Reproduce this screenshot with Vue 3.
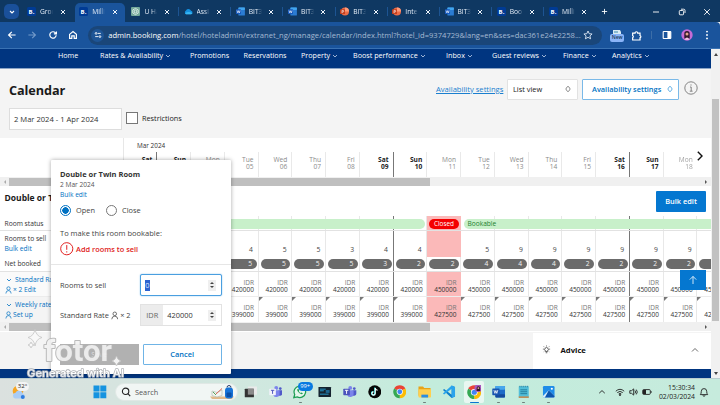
<script setup>
const tabs = [
  { icon: 'b', title: 'Grou' },
  { icon: 'b', title: 'Milli', active: true },
  { icon: 'gpt', title: 'U Ha' },
  { icon: 'cloud', title: 'Assi' },
  { icon: 'w', title: 'BIT3' },
  { icon: 'w', title: 'BIT3' },
  { icon: 'p', title: 'BIT3' },
  { icon: 'p', title: 'Inte' },
  { icon: 'w', title: 'BIT3' },
  { icon: 'b', title: 'Boo' },
  { icon: 'b', title: 'Milli' },
]

const nav = [
  { label: 'Home' },
  { label: 'Rates & Availability', menu: true },
  { label: 'Promotions' },
  { label: 'Reservations' },
  { label: 'Property', menu: true },
  { label: 'Boost performance', menu: true },
  { label: 'Inbox', menu: true },
  { label: 'Guest reviews', menu: true },
  { label: 'Finance', menu: true },
  { label: 'Analytics', menu: true },
]

const names = ['Sat', 'Sun', 'Mon', 'Tue', 'Wed', 'Thu', 'Fri']
const sell = ['', '', '', 4, 5, 5, 3, 4, 4, '', 5, 9, 9, 9, 9, 9, 9, '']
const booked = ['', '', '', 5, 5, 5, 5, 3, 2, 2, 4, 4, 4, 2, 2, 2, 2, '']
const days = sell.map((n, i) => ({
  name: names[i % 7],
  num: String(i + 2).padStart(2, '0'),
  weekend: i % 7 < 2,
  sat: i % 7 === 0,
  closed: i === 9,
  sell: n,
  booked: booked[i],
  cur: i < 3 ? '' : 'IDR',
  std: i < 3 ? '' : i < 9 ? '420000' : '450000',
  weekly: i < 3 ? '' : i < 9 ? '399000' : '427500',
}))

const apps = ['view', 'teamsw', 'whatsapp', 'monitor', 'teams', 'tiktok', 'chrome', 'folder', 'code', 'chromep', 'word', 'notes', 'photos']
const running = ['whatsapp', 'folder', 'word', 'notes', 'photos']
</script>

<template>
  <div class="screen">
    <div class="tabs">
      <div class="tab-search"><svg viewBox="0 0 8 8"><path d="M2 3l2 2 2-2" /></svg></div>
      <div v-for="(t, i) in tabs" :key="i" class="tab" :class="{ active: t.active, sep: i > 2 }">
        <svg class="fav" viewBox="0 0 9 9">
          <template v-if="t.icon === 'b'">
            <rect width="9" height="9" rx="1.5" fill="#003b95" />
            <text x="1.6" y="7" class="favb">B.</text>
          </template>
          <template v-else-if="t.icon === 'gpt'">
            <rect width="9" height="9" rx="1" fill="#75a99b" />
            <path d="M4.5 1.4l2.7 1.5v3.2L4.5 7.6 1.8 6.1V2.9zM4.5 3l1.3.8v1.5l-1.3.7-1.3-.7V3.8z" fill="none" stroke="#e9f5f0" stroke-width=".8" />
          </template>
          <template v-else-if="t.icon === 'cloud'">
            <path d="M2 7.2A2 2 0 0 1 2 3.6 2.8 2.8 0 0 1 7 3.7a1.8 1.8 0 0 1 .2 3.5z" fill="#1490df" />
            <path d="M1 6.4Q4 3.6 8.5 6.2L7.2 7.2H2z" fill="#37b6f4" />
          </template>
          <template v-else-if="t.icon === 'w'">
            <rect x="2.4" y="0.5" width="6.5" height="8" rx=".6" fill="#2b7cd3" />
            <rect x="2.4" y="0.5" width="6.5" height="2.4" rx=".6" fill="#41a5ee" />
            <rect x="0" y="2.3" width="5" height="4.7" rx=".5" fill="#185abd" />
            <path d="M1 3.5l.8 2.4.8-2.2.8 2.2.7-2.4" fill="none" stroke="#fff" stroke-width=".6" />
          </template>
          <template v-else>
            <circle cx="5" cy="4.5" r="4" fill="#ed6c47" />
            <path d="M5 .5a4 4 0 0 1 4 4H5z" fill="#ff9b7a" />
            <rect x="0" y="2.3" width="5" height="4.7" rx=".5" fill="#c43e1c" />
            <path d="M2 6.2V3.4h.9a.8.8 0 0 1 0 1.6H2" fill="none" stroke="#fff" stroke-width=".6" />
          </template>
        </svg>
        <span class="tab-title">{{ t.title }}</span>
        <svg class="x" viewBox="0 0 6 6"><path d="M1 1l4 4M5 1L1 5" /></svg>
      </div>
      <svg class="plus" viewBox="0 0 8 8"><path d="M4 1v6M1 4h6" /></svg>
      <div class="win">
        <svg viewBox="0 0 8 8"><path d="M1 4h6" /></svg>
        <svg viewBox="0 0 8 8"><rect x="1.3" y="2.5" width="4.3" height="4.3" rx=".8" /><path d="M3 1.2h2.6A1.3 1.3 0 0 1 7 2.5V5" /></svg>
        <svg viewBox="0 0 8 8"><path d="M1.2 1.2l5.6 5.6M6.8 1.2L1.2 6.8" /></svg>
      </div>
    </div>

    <div class="toolbar">
      <svg class="tb" viewBox="0 0 10 10"><path d="M8.6 5H1.6M4.8 1.8L1.6 5l3.2 3.2" /></svg>
      <svg class="tb dim" viewBox="0 0 10 10"><path d="M1.4 5h7M5.2 1.8L8.4 5 5.2 8.2" /></svg>
      <svg class="tb" viewBox="0 0 10 10"><path d="M8.2 5.3A3.2 3.2 0 1 1 7.4 2.8L8.3 3.7M8.4 1.4v2.5H5.9" /></svg>
      <svg class="tb" viewBox="0 0 10 10"><path d="M1.6 4.4L5 1.6l3.4 2.8v4H6.2V5.9H3.8v2.5H1.6z" /></svg>
      <div class="omni">
        <span class="site"><svg viewBox="0 0 10 10"><circle cx="2.6" cy="3" r="1.1" /><path d="M4.7 3h3.8M1.5 7h3.8" /><circle cx="7.4" cy="7" r="1.1" /></svg></span>
        <span class="url"><b>admin.booking.com</b>/hotel/hoteladmin/extranet_ng/manage/calendar/index.html?hotel_id=9374729&amp;lang=en&amp;ses=dac361e24e2258...</span>
        <svg class="star" viewBox="0 0 10 10"><path d="M5 1l1.2 2.7 2.9.3-2.2 1.9.7 2.9L5 7.3 2.4 8.8l.7-2.9L.9 4l2.9-.3z" /></svg>
      </div>
      <div class="ext">
        <svg viewBox="0 0 12 8"><path d="M2 1h7l1 2v3H2z" fill="#d9eaf3" /><path d="M3 3h4" stroke="#3b8bb0" /></svg>
        <span class="new">New</span>
      </div>
      <svg class="puzzle" viewBox="0 0 10 10"><path d="M1.5 2.8h2.2a1.2 1.2 0 0 1 2.4 0h2.1V5a1.1 1.1 0 0 1 0 2.1v2H1.5V7a1.1 1.1 0 0 0 0-2z" /></svg>
      <i class="tsep"></i>
      <svg class="panel" viewBox="0 0 10 10"><rect x="1.2" y="1.5" width="7.6" height="7" rx=".6" fill="none" stroke="#fff" stroke-width="1.1" /><rect x="5.4" y="1.5" width="3.4" height="7" fill="#fff" /></svg>
      <svg class="avatar" viewBox="0 0 12 12"><circle cx="6" cy="6" r="5.7" fill="#c66bd5" /><path d="M3.3 9.5V4.7a2.7 2.7 0 0 1 5.4 0v4.8z" fill="#33182f" /><circle cx="6" cy="5" r="1.5" fill="#e6a48d" /><path d="M3.5 10.7q2.5-4.5 5 0z" fill="#f0c9e0" /></svg>
      <svg class="dots" viewBox="0 0 4 10"><circle cx="2" cy="1.6" r=".95" /><circle cx="2" cy="5" r=".95" /><circle cx="2" cy="8.4" r=".95" /></svg>
    </div>

    <div class="body">
      <div class="page">
        <nav class="nav">
          <span v-for="n in nav" :key="n.label">{{ n.label }}<svg v-if="n.menu" viewBox="0 0 6 6"><path d="M1 2l2 2 2-2" /></svg></span>
        </nav>

        <header class="head">
          <h1>Calendar</h1>
          <a class="avail">Availability settings</a>
          <div class="select">List view<svg viewBox="0 0 6 8"><path d="M1.2 3.2L3 1.2l1.8 2v1.6L3 6.8l-1.8-2z" /></svg></div>
          <div class="select blue">Availability settings<svg viewBox="0 0 6 8"><path d="M1.2 3.2L3 1.2l1.8 2v1.6L3 6.8l-1.8-2z" /></svg></div>
          <svg class="info" viewBox="0 0 14 14"><circle cx="7" cy="7" r="6.2" /><path d="M6 6h1.2v4M5.8 10.2h2.8M7 3.4v1.2" /></svg>
        </header>
        <div class="filters">
          <div class="date">2 Mar 2024 - 1 Apr 2024</div>
          <i class="check"></i>
          <span>Restrictions</span>
        </div>

        <section class="cal">
          <div class="month">Mar 2024</div>
          <div class="grid dayhead">
            <div class="side"></div>
            <div v-for="d in days" :key="d.num" class="day" :class="{ wk: d.weekend, sat: d.sat, fade: d.num === '18', gone: d.num === '19' }">
              <span>{{ d.name }}</span><span>{{ d.num }}</span>
            </div>
          </div>
          <svg class="next" viewBox="0 0 8 12"><path d="M1.8 1.8L6 6l-4.2 4.2" /></svg>
          <div class="hscroll"><i class="al"></i><i class="thumb"></i><i class="ar"></i></div>

          <div class="room"><h2>Double or Twin Room</h2><button class="bulk">Bulk edit</button></div>

          <div class="rows">
            <div class="grid r1">
              <div class="side lab">Room status</div>
              <div v-for="d in days" :key="d.num" class="cell" :class="{ sat: d.sat, pink: d.closed }"></div>
              <div class="bar a"></div>
              <div class="bar c">Closed</div>
              <div class="bar b">Bookable</div>
            </div>
            <div class="grid r2">
              <div class="side lab"><span>Rooms to sell</span><a>Bulk edit</a></div>
              <div v-for="d in days" :key="d.num" class="cell" :class="{ sat: d.sat, pink: d.closed }">{{ d.sell }}</div>
            </div>
            <div class="grid r3">
              <div class="side lab">Net booked</div>
              <div v-for="d in days" :key="d.num" class="cell" :class="{ sat: d.sat }"><span class="pill">{{ d.booked }}</span></div>
            </div>
            <div class="grid r4">
              <div class="side lab rate">
                <a><svg viewBox="0 0 6 6"><path d="M1 2l2 2 2-2" /></svg>Standard Rate</a>
                <a class="sub"><svg viewBox="0 0 8 9"><circle cx="4" cy="2.7" r="1.9" /><path d="M1 8.5Q1 5.2 4 5.2T7 8.5" /></svg>× 2 Edit</a>
              </div>
              <div v-for="d in days" :key="d.num" class="cell" :class="{ sat: d.sat, pink: d.closed }"><em>{{ d.cur }}</em><span>{{ d.std }}</span></div>
            </div>
            <div class="grid r5">
              <div class="side lab rate">
                <a><svg viewBox="0 0 6 6"><path d="M1 2l2 2 2-2" /></svg>Weekly rate</a>
                <a class="sub"><svg viewBox="0 0 8 9"><circle cx="4" cy="2.7" r="1.9" /><path d="M1 8.5Q1 5.2 4 5.2T7 8.5" /></svg>Set up</a>
              </div>
              <div v-for="d in days" :key="d.num" class="cell" :class="{ sat: d.sat, pink: d.closed }"><em>{{ d.cur }}</em><span>{{ d.weekly }}</span></div>
            </div>
          </div>
          <div class="hscroll"><i class="al"></i><i class="thumb"></i><i class="ar"></i></div>
        </section>

        <div class="below">
          <div class="advice">
            <svg class="bulb" viewBox="0 0 10 10"><path d="M3.9 7.2V6.5a2 2 0 1 1 2.2 0v.7zM4.1 8.6h1.8M5 .6v.9M1 4.6h1M8 4.6h1M2 1.7l.7.7M8 1.7l-.7.7M2 7.4l.6-.5M8 7.4l-.6-.5" /></svg>
            <b>Advice</b>
            <svg class="up" viewBox="0 0 8 6"><path d="M1 4.5l3-3 3 3" /></svg>
          </div>
        </div>
        <footer class="foot"></footer>
        <div class="totop"><svg viewBox="0 0 10 10"><path d="M5 9V1.5M1.8 4.6L5 1.4l3.2 3.2" /></svg></div>
      </div>
      <div class="vscroll"><i class="vu"></i><i class="vt"></i><i class="vd"></i></div>
    </div>

    <div class="popup">
      <h3>Double or Twin Room</h3>
      <p class="pd">2 Mar 2024</p>
      <a class="pb">Bulk edit</a>
      <div class="radios"><i class="radio on"></i><span>Open</span><i class="radio"></i><span>Close</span></div>
      <p class="pm">To make this room bookable:</p>
      <p class="err"><svg viewBox="0 0 14 14"><circle cx="7" cy="7" r="6.3" /><path d="M7 3.2v4.9M7 9.6v1.3" /></svg>Add rooms to sell</p>
      <hr />
      <div class="field f1"><label>Rooms to sell</label>
        <div class="inp focus"><mark>0</mark><span class="spin"><i></i><i class="dn"></i></span></div></div>
      <div class="field f2"><label>Standard Rate <svg viewBox="0 0 8 9"><circle cx="4" cy="2.7" r="1.9" /><path d="M.8 8.5Q1 5.2 4 5.2T7.2 8.5" /></svg> × 2</label>
        <div class="inp"><span class="cur">IDR</span><span class="val">420000</span><span class="spin"><i></i><i class="dn"></i></span></div></div>
      <div class="acts"><button class="save">Save</button><button class="cancel">Cancel</button></div>
    </div>

    <div class="mark">
      <svg viewBox="0 0 110 54">
        <g class="spark">
          <path d="M9 1Q10 8 16 9.500 10 11 9 18 8 11 2 9.500 8 8 9 1z" />
          <path d="M5 14Q5.500 16.500 8 17 5.500 17.500 5 20 4.500 17.500 2 17 4.500 16.500 5 14z" />
          <path d="M90.500 28Q91.500 32 95 33 91.500 34 90.500 38 89.500 34 86 33 89.500 32 90.500 28z" />
        </g>
        <text x="18" y="33" class="logo" textLength="68" lengthAdjust="spacingAndGlyphs">fotor</text>
        <text x="1" y="48.5" class="gen" textLength="97" lengthAdjust="spacingAndGlyphs">Generated with AI</text>
      </svg>
    </div>

    <div class="taskbar">
      <div class="weather">
        <svg viewBox="0 0 20 18"><circle cx="7" cy="8" r="5.300" fill="#f6a623" /><path d="M4 15.500a3 3 0 0 1 .5-5.800 4 4 0 0 1 7.500 1 2.500 2.500 0 0 1-.5 4.800z" fill="#a9ccf5" /><circle cx="11.800" cy="14" r="2" fill="#2f7de0" /></svg>
        <span>32°</span>
      </div>
      <svg class="start" viewBox="0 0 14 14"><path d="M.5.5h6v6h-6zM7.300.5h6v6h-6zM.5 7.300h6v6h-6zM7.300 7.300h6v6h-6z" fill="#1593e0" /></svg>
      <div class="search">
        <svg class="glass" viewBox="0 0 10 10"><circle cx="4.600" cy="4.300" r="3.200" /><path d="M6.900 6.700L9.200 9.200" /></svg>
        <span>Search</span>
        <svg class="art" viewBox="0 0 26 16"><path d="M1 12.500h24l-2 2.500H3z" fill="#e0b98a" /><path d="M3 7l5 1.500L13 6v5.500L8 13l-5-1.500z" fill="#f4f6f3" stroke="#a9b5a8" stroke-width=".6" /><path d="M7 10l6-5.500" stroke="#d9685b" stroke-width="1" /><path d="M4 8l3 3" stroke="#55a35e" stroke-width="1" /><rect x="16" y="3.500" width="8" height="11" rx="3" fill="#1673d8" /><rect x="17.500" y="8.500" width="5" height="4.500" rx="1" fill="#0b4fa5" /><path d="M18 3.500a2 2 0 0 1 4 0" fill="none" stroke="#273c70" /></svg>
      </div>
      <div class="apps">
        <div v-for="a in apps" :key="a" class="app" :class="{ sel: a === 'chromep', run: running.includes(a) }">
          <svg viewBox="0 0 14 14">
            <template v-if="a === 'view'"><rect x="4" y="1.500" width="9.500" height="8.500" rx=".6" fill="#e9eaea" /><rect x=".8" y="3.800" width="9.500" height="9" rx=".6" fill="#333" /><rect x="4" y="3.800" width="6.300" height="6.200" fill="#8b8b8b" /></template>
            <template v-else-if="a === 'teamsw' || a === 'teams'">
              <circle cx="7.500" cy="3" r="2" fill="#7b83eb" /><circle cx="11.700" cy="3.700" r="1.400" fill="#5059c9" /><path d="M10 5.500h3.800V9a2.300 2.300 0 0 1-3.800 1.500z" fill="#5059c9" /><path d="M4.500 5.500H11V9.500a3.400 3.400 0 0 1-6.500 1z" fill="#7b83eb" />
              <rect x=".3" y="3.800" width="6.800" height="6.800" rx=".7" :fill="a === 'teams' ? '#4b53bc' : '#f3f3fb'" /><path d="M2 5.500h3.500M3.700 5.500v3.700" :stroke="a === 'teams' ? '#fff' : '#4b53bc'" stroke-width="1" />
            </template>
            <template v-else-if="a === 'whatsapp'"><path d="M.8 13.200l1-3.400A6 6 0 1 1 4.300 12.300z" fill="#e4f6ec" stroke="#1e9e54" stroke-width="1.300" /><path d="M4.600 4.200q-.8 1 .6 2.900t3.700 2.400q1 0 1.300-1L8.800 7.700l-.9.700Q6.500 7.700 6 6.500l.5-.8-.8-1.500z" fill="#1e9e54" /></template>
            <template v-else-if="a === 'monitor'"><rect x=".5" y="2" width="13" height="10.500" rx=".5" fill="#15232f" /><path d="M2 4.300h6M2 6h4M2 9.500h9" stroke="#2aa6dd" stroke-width=".9" /><rect x="8" y="5.200" width="4" height="3" fill="#1d6690" /></template>
            <template v-else-if="a === 'tiktok'"><circle cx="7" cy="7" r="6.700" fill="#050505" /><path d="M7.500 3v5.800a1.700 1.700 0 1 1-1.700-1.700" fill="none" stroke="#25f4ee" stroke-width="1.300" transform="translate(-.4 -.3)" /><path d="M7.500 3v5.800a1.700 1.700 0 1 1-1.700-1.700M7.500 3.200q.4 2 2.500 2.200" fill="none" stroke="#fff" stroke-width="1.200" /></template>
            <template v-else-if="a === 'chrome' || a === 'chromep'">
              <path d="M7 7L1.200 3.600A6.700 6.700 0 0 1 12.800 3.600z" fill="#ea4335" /><path d="M7 7L12.800 3.600A6.700 6.700 0 0 1 7 13.700z" fill="#fbbc05" /><path d="M7 7v6.700A6.700 6.700 0 0 1 1.200 3.600z" fill="#34a853" /><circle cx="7" cy="7" r="3.200" fill="#fff" /><circle cx="7" cy="7" r="2.500" fill="#4285f4" />
              <template v-if="a === 'chromep'"><circle cx="11" cy="3" r="3.800" fill="#a757bd" /><path d="M9.300 5.800V2.800a1.700 1.700 0 0 1 3.400 0v3z" fill="#33182f" /><circle cx="11" cy="3" r=".9" fill="#e6a48d" /></template>
            </template>
            <template v-else-if="a === 'folder'"><path d="M.5 1.500h4.700l1.300 1.700h6.500v8H.5z" fill="#e8a317" /><rect x=".5" y="4.300" width="13" height="8.700" rx=".7" fill="#ffd04f" /><rect x="3.500" y="10" width="7" height="3" fill="#2d8de0" /></template>
            <template v-else-if="a === 'code'"><path d="M10 .6L13.500 2.200v9.600L10 13.400 1 5.200l1.200-1.100L10 10z" fill="#0e7fc9" /><path d="M10 .6L1 8.800l1.200 1.100L10 4zM10 .6l3.500 1.600v9.600L10 13.400z" fill="#2aa4ec" /></template>
            <template v-else-if="a === 'word'"><rect x="3.500" y="1" width="10" height="12" rx=".8" fill="#1e6cc8" /><rect x="3.500" y="1" width="10" height="4" rx=".8" fill="#46a6ec" /><rect x="3.500" y="9.500" width="10" height="3.500" rx=".8" fill="#144a9c" /><rect x=".3" y="3.500" width="7.500" height="7" rx=".6" fill="#1855b0" /><path d="M2 5.300l1 3.400 1-3 1 3 1-3.400" fill="none" stroke="#fff" stroke-width=".8" /></template>
            <template v-else-if="a === 'notes'"><rect x="1.800" y="1.200" width="10.400" height="12" rx=".7" fill="#53bfd9" /><rect x="1.800" y="11.800" width="10.400" height="1.600" fill="#c48b4f" /><path d="M3.500 5h7M3.500 7h7M3.500 9h7" stroke="#176c8c" stroke-width=".8" /><path d="M3 .8v1.500M5 .8v1.500M7 .8v1.500M9 .8v1.500M11 .8v1.500" stroke="#176c8c" stroke-width=".7" /></template>
            <template v-else><rect x="1" y="1" width="12" height="12" rx="1.300" fill="#1f8ce8" /><path d="M1 11.500L7 5.500l6 6v.5a1 1 0 0 1-1 1H2a1 1 0 0 1-1-1z" fill="#d8eefd" /><path d="M7 5.500l6 6v.5a1 1 0 0 1-1 1H3z" fill="#0c55ad" /><circle cx="10.200" cy="3.900" r="1.100" fill="#fff" /></template>
          </svg>
          <span v-if="a === 'whatsapp'" class="badge">99+</span>
        </div>
      </div>
      <div class="tray">
        <svg viewBox="0 0 10 10"><path d="M2.200 6.200L5 3.600l2.800 2.600" /></svg>
        <svg viewBox="0 0 10 10"><path d="M.8 4.200Q5 .4 9.200 4.200M2.300 5.600Q5 3.200 7.700 5.600M3.700 7Q5 5.800 6.300 7" /><circle cx="5" cy="8" r=".6" fill="#222" /></svg>
        <svg viewBox="0 0 10 10"><path d="M.8 3.700h1.700L4.700 1.900v6.200L2.500 6.300H.8zM6 3.500q1.200 1.500 0 3M7.300 2.600q2 2.400 0 4.800" /></svg>
        <svg viewBox="0 0 10 10"><rect x=".7" y="2.600" width="7.600" height="4.800" rx="1" /><rect x="1" y="3" width="3" height="4" fill="#222" stroke="none" /><path d="M9.200 4.200v1.600" /></svg>
        <div class="clock"><span>15:30:34</span><span>02/03/2024</span></div>
        <svg class="bell" viewBox="0 0 10 10"><path d="M1.300 7.600q1-.9 1-3.300a2.700 2.700 0 0 1 5.400 0q0 2.400 1 3.300zM4 8.300a1 1 0 0 0 2 0" /></svg>
      </div>
    </div>
  </div>
</template>

<style>
body { margin: 0; overflow: hidden; }
</style>

<style scoped>
* { box-sizing: border-box; }
svg { display: block; flex: none; fill: none; }
h1, h2, h3, p { margin: 0; }
button { font: inherit; border: 0; padding: 0; }
.screen { position: relative; width: 720px; height: 405px; overflow: hidden; display: flex; flex-direction: column; font-family: "Open Sans", "Noto Sans", sans-serif; font-size: 6.8px; line-height: 10px; color: #333; background: #f4f4f4; white-space: nowrap; }

.tabs { height: 22px; flex: none; background: #0f3862; display: flex; padding-left: 4px; }
.tab-search { width: 15px; height: 15px; margin: 4px 4px 0 0; border-radius: 5px; background: #1a509a; }
.tab-search svg { width: 8px; height: 8px; margin: 3.500px; stroke: #fff; stroke-width: 1.100; }
.tab { width: 52.200px; height: 19px; margin-top: 3px; padding: 0 0 2px 4px; display: flex; align-items: center; position: relative; flex: none; }
.tab.active { background: #1a549c; border-radius: 5px 5px 0 0; width: 49.500px; margin-right: 2.700px; }
.tab.sep::before { content: ""; position: absolute; left: -1.500px; top: 4px; width: 1px; height: 9px; background: #1d5492; }
.fav { width: 9px; height: 9px; }
.favb { font: bold 6px "Open Sans", sans-serif; fill: #fff; }
.tab-title { width: 13px; margin-left: 4px; overflow: hidden; color: #e6eef8; font-size: 6.700px; -webkit-mask-image: linear-gradient(90deg, #000 60%, transparent); mask-image: linear-gradient(90deg, #000 60%, transparent); }
.x { width: 6px; height: 6px; margin-left: 6.500px; stroke: #eef4fb; stroke-width: 1; }
.plus { width: 7px; height: 7px; margin: 8px 0 0 4px; stroke: #fff; stroke-width: 1; }
.win { display: flex; margin-left: auto; padding: 7.500px 9px 0 0; gap: 17.500px; }
.win svg { width: 8px; height: 8px; stroke: #fff; stroke-width: .9; }

.toolbar { height: 27px; flex: none; background: #1a549c; border-bottom: 1px solid #3a72b3; border-radius: 0 4px 0 0; display: flex; align-items: center; padding-left: 7px; }
.tb { width: 10px; height: 10px; margin-right: 10.300px; stroke: #fff; stroke-width: 1.200; }
.tb.dim { stroke: #7299c9; }
.omni { width: 514px; height: 19px; border-radius: 10px; background: #1a4679; display: flex; align-items: center; flex: none; }
.site { width: 13px; height: 13px; margin-left: 3px; border-radius: 50%; background: #1e5596; display: flex; align-items: center; justify-content: center; }
.site svg { width: 8px; height: 8px; stroke: #fff; stroke-width: 1.100; }
.url { margin-left: 4px; color: #a4b9d2; font-size: 7.620px; width: 470px; flex: none; }
.url b { color: #fff; font-weight: 400; }
.star { width: 10px; height: 10px; margin-left: 5px; stroke: #dfe9f5; stroke-width: .9; }
.ext { width: 14px; height: 13px; margin-left: 8px; position: relative; flex: none; }
.ext svg { width: 12px; height: 8px; margin-left: 1px; }
.new { position: absolute; left: 0; top: 5.500px; width: 14px; height: 7.500px; border-radius: 2px; background: #8ab4f8; color: #163457; font-size: 5px; line-height: 7.500px; text-align: center; font-weight: 600; }
.puzzle { width: 11px; height: 11px; margin-left: 6.500px; stroke: #fff; stroke-width: 1.100; }
.tsep { width: 1px; height: 8px; margin-left: 9px; background: #3c6ea8; }
.panel { width: 10px; height: 10px; margin-left: 10px; }
.avatar { width: 12px; height: 12px; margin-left: 9px; }
.dots { width: 4px; height: 10px; margin-left: 12.500px; fill: #fff; }

.body { height: 329px; flex: none; display: flex; }
.page { width: 711px; position: relative; overflow: hidden; display: flex; flex-direction: column; }
.nav { height: 20px; flex: none; background: #003580; border-bottom: 1px solid #8ba4c6; display: grid; grid-template-columns: 42px 90px 53.500px 57.500px 52px 93px 46px 71px 49px 50px; padding: 0 0 0 58px; color: #fff; font-size: 7.200px; line-height: 13px; font-weight: 500; }
.nav span { display: flex; align-items: center; height: 13px; }
.nav svg { width: 6px; height: 6px; margin-left: 2px; stroke: #c5d5ec; stroke-width: .8; }

.head { display: flex; height: 39px; flex: none; padding: 9.500px 12.500px 0 9px; align-items: flex-start; }
h1 { font-size: 12.700px; line-height: 22px; color: #1a1a1a; width: 427px; letter-spacing: -.1px; }
.avail { width: 71px; line-height: 20px; color: #1a7fcf; text-decoration: underline; font-size: 7.600px; }
.select { width: 70.500px; height: 21.500px; border: 1px solid #e2e2e2; background: #fff; display: flex; align-items: center; justify-content: space-between; padding: 0 6px 0 5px; color: #1a1a1a; border-radius: 1px; font-size: 7.400px; }
.select svg { width: 6px; height: 8px; stroke: #555; stroke-width: .7; }
.select.blue { width: 97px; margin-left: 4.500px; padding: 0 5px 0 9px; border-color: #7ab9e8; color: #0071c2; font-weight: 600; }
.select.blue svg { stroke: #1a8bd8; }
.info { width: 14px; height: 14px; margin: 2px 0 0 5px; stroke: #777; stroke-width: .9; }
.filters { display: flex; height: 30px; flex: none; padding-left: 9px; align-items: flex-start; line-height: 21px; }
.date { width: 112.500px; height: 21.500px; background: #fff; border: 1px solid #ddd; padding-left: 4px; font-size: 7.600px; color: #333; }
.check { width: 11.500px; height: 11.500px; margin: 4px 4.500px 0 4.500px; border: 1.200px solid #777; background: #fff; }
.filters > span { color: #222; font-size: 7.300px; line-height: 20px; }

.cal { background: #fff; position: relative; flex: none; height: 194px; }
.month { height: 14px; padding-left: 137px; line-height: 16px; font-size: 6.400px; color: #333; }
.grid { display: grid; grid-template-columns: 123.500px repeat(18, 33.750px); overflow: hidden; position: relative; }
.cal::before { content: ""; position: absolute; left: 123px; top: 0; width: 1px; height: 38px; background: #e7e7e7; }
.dayhead { height: 25px; }
.day { border-right: 1px solid #e9e9e9; display: flex; flex-direction: column; text-align: right; padding: 5px 4px 0 0; line-height: 6.700px; color: #8b8b8b; font-size: 6.600px; }
.day.wk { color: #222; font-weight: 700; }
.day.sat, .cell.sat { border-right: 1.500px solid #777; }
.day.fade { border: 0; padding-right: 4.500px; opacity: .8; }
.day.gone { visibility: hidden; }
.next { position: absolute; right: 7px; top: 12px; width: 8px; height: 12px; stroke: #111; stroke-width: 1.400; }
.hscroll { height: 9px; background: #f0f0f0; display: flex; align-items: center; padding: 0 4px; }
.al, .ar { border: 2px solid transparent; border-right-color: #aaa; border-left: 0; width: 0; margin-right: 3px; }
.thumb { height: 8px; width: 421px; background: #bfbfbf; }
.ar { border: 2px solid transparent; border-left: 2.500px solid #555; border-right: 0; margin: 0 0 0 auto; }
.room { height: 30px; display: flex; justify-content: space-between; padding: 5px 5px 0 4.500px; }
h2 { font-size: 8.500px; line-height: 14px; color: #1a1a1a; }
.bulk { width: 50px; height: 21px; background: #0577d0; color: #fff; font-weight: 600; font-size: 7.400px; line-height: 21px; border-radius: 1px; }

.rows { height: 106px; }
.cell { border-right: 1px solid #e8e8e8; }
.side { padding-left: 4.500px; }
.lab { font-size: 6.700px; color: #333; }
.lab a { color: #0071c2; display: flex; }
.r1 { height: 15px; border-bottom: 1px solid #e2e2e2; line-height: 15px; }
.r2 { height: 26px; }
.r2 .lab { display: flex; flex-direction: column; padding-top: 3px; }
.r2 .cell { text-align: right; padding: 13.500px 4.500px 0 0; color: #444; font-size: 6.800px; }
.r3 { height: 15px; border-bottom: 1px solid #e2e2e2; line-height: 13px; }
.r3 .cell { padding: 2px 1px 0 2px; }
.pill { display: block; height: 10px; border-radius: 5px; background: #6b6b6b; color: #f2f2f2; text-align: right; padding-right: 4.500px; line-height: 10px; font-size: 6.700px; }
.r4, .r5 { height: 25px; }
.r4 { border-bottom: 1px solid #ececec; }
.r4 .cell, .r5 .cell { display: flex; flex-direction: column; text-align: right; line-height: 7px; font-size: 6.500px; padding: 7px 3.500px 0 0; color: #333; }
.r5 .cell { padding-top: 7px; position: relative; }
.r5 .cell::before { content: ""; position: absolute; left: 0; top: 0; border-top: 4px solid #777; border-right: 4px solid transparent; }
.r5 .pink::before { display: none; }
.cell em { font-style: normal; color: #777; }
.rate { padding-top: 2.500px; background: #fafafa; }
.r5 .rate { background: #f4f4f4; }
.rate svg { width: 6px; height: 6px; margin: 2px 3px 0 1.500px; stroke: #0071c2; stroke-width: .8; }
.rate .sub svg { width: 7px; height: 8px; margin: 1px 1.500px 0 0; }
.pink { background: #fbb9b9; border-right-color: #fbb9b9; }
.bar { position: absolute; top: 3px; height: 10px; background: #c8f0ca; line-height: 10px; font-size: 6.600px; }
.bar.a { left: 124px; width: 301px; border-radius: 5px; }
.bar.b { left: 463.500px; width: 260px; border-radius: 5px; padding-left: 4px; color: #1d7f2c; }
.bar.c { left: 429px; width: 30px; border-radius: 5px; background: #f40000; color: #fff; text-align: center; font-size: 6.400px; }

.below { height: 36px; flex: none; margin-top: 1px; display: flex; justify-content: flex-end; }
.advice { width: 178px; background: #fff; display: flex; align-items: center; padding: 0 12px 3px 9px; }
.bulb { width: 9px; height: 9px; stroke: #222; stroke-width: .8; }
.advice b { margin-left: 9.500px; font-size: 7.700px; color: #111; }
.up { width: 8px; height: 6px; margin-left: auto; stroke: #444; stroke-width: .8; }
.foot { flex: 1; background: #003580; }
.totop { position: absolute; left: 679.500px; top: 221px; width: 26.500px; height: 20px; background: #0577d0; display: flex; align-items: center; justify-content: center; }
.totop svg { width: 10px; height: 10px; stroke: #fff; stroke-width: .8; }
.vscroll { width: 9px; background: #f1f1f1; display: flex; flex-direction: column; align-items: center; }
.vu { border: 2.500px solid transparent; border-top: 0; border-bottom: 3px solid #444; margin: 4px 0 42px; }
.vt { width: 7px; height: 222px; background: #c1c1c1; margin-top: 1px; }
.vd { border: 2.500px solid transparent; border-bottom: 0; border-top: 3px solid #444; margin: auto 0 3px; }

.popup { position: absolute; left: 51px; top: 160px; width: 179.500px; height: 214px; background: #fff; box-shadow: 0 0 4px rgba(0, 0, 0, .35); border-radius: 1px; padding: 9px 9px 0; font-size: 7.400px; display: flex; flex-direction: column; }
h3 { font-size: 7.500px; line-height: 11px; color: #333; }
.pd { font-size: 6.600px; line-height: 10px; color: #555; }
.pb { font-size: 6.600px; line-height: 10px; color: #0071c2; }
.radios { height: 12px; margin-top: 4px; display: flex; align-items: center; }
.radio { width: 11px; height: 11px; border: 1.200px solid #777; border-radius: 50%; margin-right: 5px; }
.radio.on { border-color: #0071c2; background: radial-gradient(circle, #0071c2 3px, #fff 3.500px); }
.radios span { width: 30px; color: #444; }
.pm { margin-top: 10.500px; line-height: 12px; color: #444; font-size: 7.500px; }
.err { height: 14px; margin-top: 3.500px; display: flex; align-items: center; color: #e01a1a; font-weight: 600; }
.err svg { width: 13.500px; height: 13.500px; margin-right: 2.500px; stroke: #e01a1a; stroke-width: 1; }
hr { border: 0; border-top: 1px solid #e6e6e6; width: 179.500px; margin: 8px 0 0 -9px; flex: none; }
.field { display: flex; align-items: center; height: 22px; flex: none; margin-top: 9px; }
.f2 { margin-top: 8px; }
.field label { width: 80.500px; display: flex; align-items: center; color: #444; white-space: pre; }
.field label svg { width: 7.500px; height: 9px; stroke: #444; stroke-width: .8; }
.inp { width: 81.500px; height: 21.500px; border: 1px solid #e2e2e2; display: flex; align-items: center; background: #fff; }
.inp.focus { border: 1.500px solid #4a9fe0; padding-left: 4px; border-radius: 2px; box-shadow: 0 0 1.500px #7ab9e8; }
mark { background: #2c62cf; color: #dfeaff; width: 5px; height: 11px; line-height: 11px; }
.cur { width: 22px; height: 100%; line-height: 20px; background: #ececec; text-align: center; color: #666; }
.val { margin-left: 4px; color: #333; }
.spin { width: 8px; height: 11px; margin: 0 5px 0 auto; background: #efefef; display: flex; flex-direction: column; align-items: center; justify-content: center; gap: 2px; }
.spin i { border: 2px solid transparent; border-top: 0; border-bottom: 2.500px solid #444; }
.spin i.dn { border-bottom: 0; border-top: 2.500px solid #444; }
.acts { display: flex; gap: 4px; margin-top: 17.500px; }
.save { width: 79px; height: 21.500px; background: #b1b1b1; color: #ddd; }
.cancel { width: 79px; height: 21.500px; background: #fff; border: 1px solid #6fb4e6; color: #0071c2; font-weight: 600; border-radius: 1px; }

.mark { position: absolute; left: 26px; top: 328px; width: 110px; height: 54px; opacity: .9; }
.mark svg { width: 110px; height: 54px; }
.spark path { fill: #fafafa; stroke: #c4c4c4; stroke-width: .9; }
.logo { font: 700 30px Roboto, sans-serif; fill: #f2f2f2; stroke: #b4b4b4; stroke-width: 2; paint-order: stroke; stroke-linejoin: round; }
.gen { font: 600 10.500px Inter, sans-serif; fill: #fff; stroke: #a6a9ad; stroke-width: 1.400; paint-order: stroke; stroke-linejoin: round; }

.taskbar { height: 27px; flex: none; border-top: 1px solid #b9cdd0; background: linear-gradient(90deg, #dbe1df, #cfe8df 38%, #c3ecdc 60%, #c6ebdd); display: flex; align-items: center; position: relative; }
.weather { width: 20px; height: 18px; margin-left: 11px; position: relative; }
.weather svg { width: 20px; height: 18px; }
.weather span { position: absolute; left: 5px; top: -1px; width: 13px; height: 9px; border-radius: 5px; background: #f4f4f4; font-size: 6px; line-height: 9px; text-align: center; color: #222; }
.start { width: 14px; height: 14px; margin-left: 61.500px; }
.search { width: 123px; height: 18px; margin-left: 8px; border-radius: 9px; background: #f1f6f4; display: flex; align-items: center; padding-left: 5px; border: 1px solid #e0e8e5; }
.glass { width: 10px; height: 10px; stroke: #222; stroke-width: 1.100; }
.search span { margin-left: 4.500px; font-size: 7.300px; color: #555; }
.art { width: 26px; height: 16px; margin-left: auto; margin-right: 2px; }
.apps { display: flex; margin-left: .5px; }
.app { width: 24.850px; height: 22px; display: flex; align-items: center; justify-content: center; position: relative; }
.app svg { width: 13.500px; height: 13.500px; }
.app.sel::before { content: ""; position: absolute; left: 2px; right: 2px; top: 0; bottom: 0; background: #e8f7f1; border-radius: 2px; }
.app.sel svg { position: relative; width: 14.500px; height: 14.500px; }
.app.sel::after { content: ""; position: absolute; left: 8px; bottom: 0; width: 9px; height: 1.500px; border-radius: 1px; background: #0a75d1; }
.app.run::after { content: ""; position: absolute; left: 11px; bottom: 0; width: 3px; height: 1.500px; border-radius: 1px; background: #70807b; }
.badge { position: absolute; left: 10px; top: 1px; width: 15px; height: 9px; border-radius: 5px; background: #087ae0; color: #fff; font-size: 5.800px; line-height: 9px; text-align: center; z-index: 1; }
.tray { display: flex; align-items: center; margin-left: auto; padding-right: 11px; }
.tray svg { width: 10px; height: 10px; stroke: #222; stroke-width: .9; margin-right: 3.500px; }
.tray svg:first-child { margin-right: 8px; }
.clock { width: 39.500px; display: flex; flex-direction: column; text-align: right; font-size: 6.800px; line-height: 9px; color: #222; }
.tray .bell { margin: 0 0 0 4px; }
</style>
